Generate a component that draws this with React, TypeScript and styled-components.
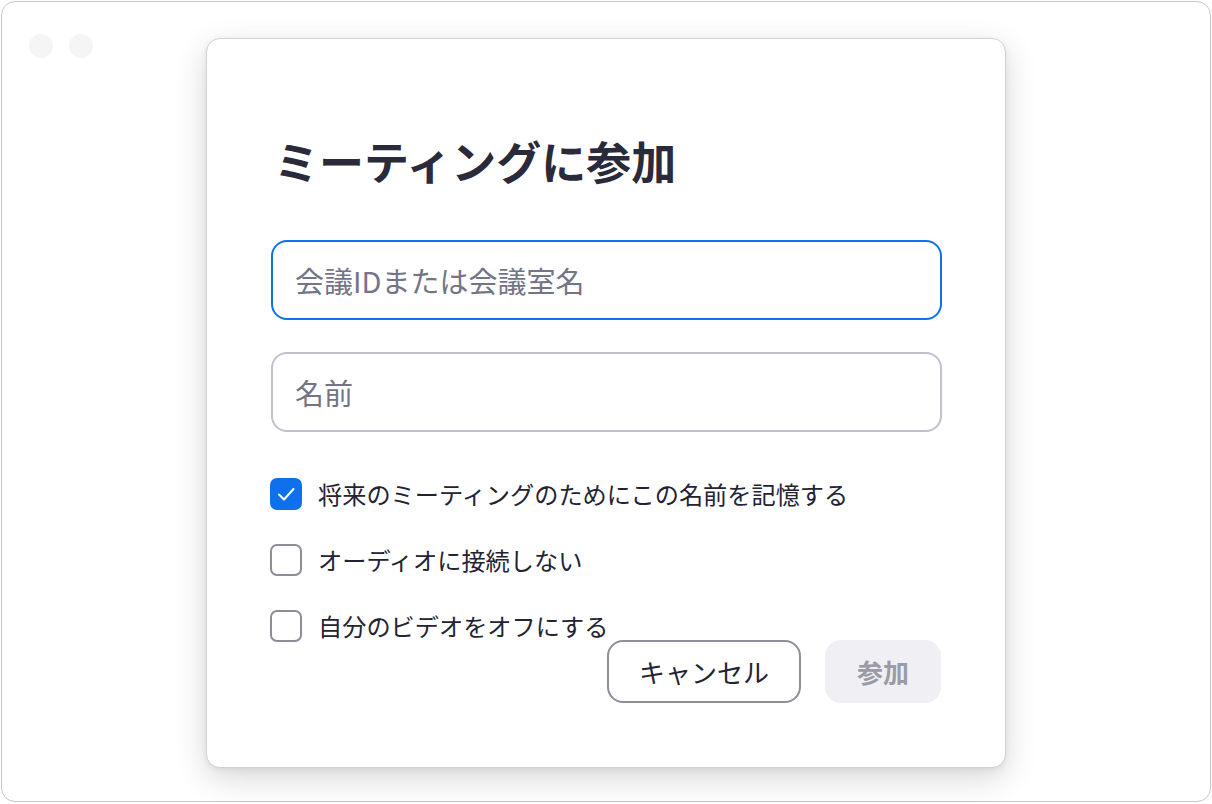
import React from "react";
import styled, { createGlobalStyle } from "styled-components";

const GlobalStyle = createGlobalStyle`
  html, body {
    margin: 0;
    padding: 0;
    background: #ffffff;
  }
  body {
    font-family: "Noto Sans CJK JP", "Noto Sans", sans-serif;
    color: #232333;
  }
  * { box-sizing: border-box; }
`;

const Window = styled.div`
  position: relative;
  margin: 1px;
  width: 1210px;
  height: 801px;
  border: 1px solid #c8c8c8;
  border-radius: 14px;
  background: #ffffff;
  display: flex;
  justify-content: center;
  align-items: flex-start;
  padding-top: 36px;
`;

const TrafficLights = styled.div`
  position: absolute;
  left: 27px;
  top: 32px;
  display: flex;
  gap: 16px;
`;

const Light = styled.span`
  display: block;
  width: 24px;
  height: 24px;
  border-radius: 50%;
  background: #f5f5f5;
`;

const Dialog = styled.div`
  width: 800px;
  background: #ffffff;
  border: 1px solid #d2d2d6;
  border-radius: 14px;
  box-shadow: 0 10px 32px rgba(0, 0, 0, 0.16), 0 2px 6px rgba(0, 0, 0, 0.06);
  padding: 96px 64px 64px 64px;
  display: flex;
  flex-direction: column;
`;

const Title = styled.h1`
  margin: 0 0 53px 3px;
  font-size: 45px;
  line-height: 52px;
  font-weight: 700;
  color: #2a2a3a;
  letter-spacing: 0;
`;

const Field = styled.input<{ $focused?: boolean }>`
  display: block;
  width: 671px;
  height: 80px;
  border: 2px solid ${(p) => (p.$focused ? "#0e71eb" : "#c1c1cd")};
  border-radius: 16px;
  padding: 0 22px;
  font-family: "Noto Sans CJK JP", "Noto Sans", sans-serif;
  font-size: 29px;
  color: #232333;
  background: #ffffff;
  outline: none;
  &::placeholder {
    color: #747487;
  }
`;

const Fields = styled.div`
  display: flex;
  flex-direction: column;
  gap: 32px;
  margin-bottom: 46px;
`;

const Options = styled.div`
  display: flex;
  flex-direction: column;
  gap: 34px;
  margin-left: -1px;
`;

const OptionRow = styled.label`
  display: flex;
  align-items: center;
  gap: 16px;
  height: 32px;
  font-size: 24.2px;
  line-height: 32px;
  color: #232333;
  white-space: nowrap;
`;

const Box = styled.span<{ $checked?: boolean }>`
  flex: none;
  width: 32px;
  height: 32px;
  border-radius: 7px;
  border: 2px solid ${(p) => (p.$checked ? "#0e71eb" : "#8d8d99")};
  background: ${(p) => (p.$checked ? "#0e71eb" : "#ffffff")};
  display: flex;
  align-items: center;
  justify-content: center;
`;

const Footer = styled.div`
  display: flex;
  justify-content: flex-end;
  gap: 24px;
  margin-top: -2px;
`;

const Button = styled.button<{ $primary?: boolean }>`
  height: 63px;
  border-radius: 16px;
  font-family: "Noto Sans CJK JP", "Noto Sans", sans-serif;
  font-size: 26px;
  cursor: pointer;
  ${(p) =>
    p.$primary
      ? `
    width: 116px;
    border: none;
    background: #efeff4;
    color: #9b9ba8;
    font-weight: 700;
  `
      : `
    width: 194px;
    border: 2px solid #8e8e99;
    background: #ffffff;
    color: #232333;
    font-weight: 400;
  `}
`;

const CheckIcon = () => (
  <svg width="22" height="22" viewBox="0 0 22 22" fill="none">
    <polyline
      points="4,11.5 9,16.5 18.5,6"
      stroke="#ffffff"
      strokeWidth="2"
      strokeLinecap="round"
      strokeLinejoin="round"
    />
  </svg>
);

const options = [
  { label: "将来のミーティングのためにこの名前を記憶する", checked: true },
  { label: "オーディオに接続しない", checked: false },
  { label: "自分のビデオをオフにする", checked: false },
];

export default function App() {
  return (
    <>
      <GlobalStyle />
      <Window>
        <TrafficLights>
          <Light />
          <Light />
        </TrafficLights>
        <Dialog>
          <Title>ミーティングに参加</Title>
          <Fields>
            <Field $focused placeholder="会議IDまたは会議室名" />
            <Field placeholder="名前" />
          </Fields>
          <Options>
            {options.map((o) => (
              <OptionRow key={o.label}>
                <Box $checked={o.checked}>{o.checked && <CheckIcon />}</Box>
                {o.label}
              </OptionRow>
            ))}
          </Options>
          <Footer>
            <Button>キャンセル</Button>
            <Button $primary>参加</Button>
          </Footer>
        </Dialog>
      </Window>
    </>
  );
}
